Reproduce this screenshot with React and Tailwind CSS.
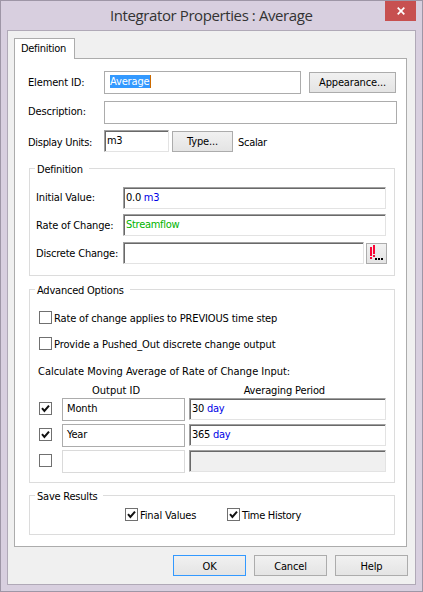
import React from "react";
import clsx from "clsx";

const outputs = [
  { id: "Month", value: "30", unit: "day", checked: true },
  { id: "Year", value: "365", unit: "day", checked: true },
  { id: "", value: "", unit: "", checked: false },
];

const Button = ({ children, className, primary }) => (
  <button
    className={clsx(
      "flex h-[21px] shrink-0 items-center justify-center border bg-linear-to-b from-[#f1f1f1] to-[#e4e4e4]",
      primary ? "border-[#3399ff]" : "border-[#acacac]",
      className
    )}
  >
    {children}
  </button>
);

const Checkbox = ({ checked }) => (
  <span className="flex size-[13px] shrink-0 items-center justify-center border border-[#707070] bg-white">
    {checked && (
      <svg width="11" height="11" viewBox="0 0 11 11" fill="none">
        <path d="M2 5.2 L4.4 7.9 L9 2.6" stroke="#111" strokeWidth="2" />
      </svg>
    )}
  </span>
);

/* flat single-line field */
const Field = ({ children, className }) => (
  <div className={clsx("flex shrink-0 items-center border bg-white", className)}>{children}</div>
);

/* sunken field for values and units */
const Sunken = ({ children, className }) => (
  <div
    className={clsx(
      "h-[22px] shrink-0 border border-t-[#a0a0a0] border-r-[#e3e3e3] border-b-[#e3e3e3] border-l-[#a0a0a0] shadow-[inset_1px_1px_0_#696969] pl-[2px] pt-[2px] leading-[15px] tracking-[-0.28px]",
      className
    )}
  >
    {children}
  </div>
);

const Group = ({ title, className, children }) => (
  <section className={clsx("ml-[14px] w-[366px] border border-[#dcdcdc]", className)}>
    <h2 className="-mt-[8px] ml-[5px] flex h-[15px] w-fit items-center bg-white pt-[2px] pr-[6px] pl-[2px] tracking-[-0.22px]">
      {title}
    </h2>
    {children}
  </section>
);

export default function App() {
  return (
    <div className="flex h-[592px] w-[423px] flex-col border border-[#9e96a6] bg-[#d8cfdf] font-['DejaVu_Sans_Condensed','DejaVu_Sans',sans-serif] text-[11px] leading-[15px] tracking-[-0.15px] whitespace-nowrap text-black">
      <header className="flex h-[29px] shrink-0">
        <h1 className="w-[384px] pl-[109px] font-['Open_Sans',sans-serif] text-[15px] leading-[29px] tracking-[-0.4px] text-[#333]">
          Integrator Properties : Average
        </h1>
        <button className="flex h-[20px] w-[31px] items-center justify-center bg-[#c75050]">
          <svg width="8" height="8" viewBox="0 0 8 8">
            <path d="M0.7 0.7 L7.3 7.3 M7.3 0.7 L0.7 7.3" stroke="#fff" strokeWidth="1.7" />
          </svg>
        </button>
      </header>

      <main className="ml-[6px] h-[555px] w-[409px] border border-[#b0a9b7] bg-[#f0f0f0] pt-[7px] pl-[6px]">
        <div className="relative z-10 -mb-px flex h-[21px] w-[61px] items-center border border-b-0 border-[#acacac] bg-white pb-[2px] pl-[6px] tracking-[-0.3px]">
          Definition
        </div>

        <div className="h-[489px] w-[393px] border border-[#acacac] bg-white pt-[12px]">
          <div className="flex h-[23px] items-center pl-[13px]">
            <span className="w-[76px]">Element ID:</span>
            <Field className="h-[23px] w-[197px] border-[#acacac] pl-[5px]">
              <span className="-mt-[2px] h-[13px] border-r border-[#cc6a00] bg-[#3399ff] leading-[13px] text-white">
                Average
              </span>
            </Field>
            <Button className="ml-[8px] w-[87px]">Appearance...</Button>
          </div>
          <div className="mt-[7px] flex h-[23px] items-center pl-[13px]">
            <span className="w-[76px] pb-[2px]">Description:</span>
            <Field className="h-[23px] w-[293px] border-[#acacac]" />
          </div>
          <div className="mt-[6px] flex h-[22px] items-center pl-[13px]">
            <span className="w-[76px] pt-[2px] tracking-[-0.3px]">Display Units:</span>
            <Sunken className="w-[65px]">m3</Sunken>
            <Button className="mt-px ml-[3px] w-[61px]">Type...</Button>
            <span className="ml-[5px] pt-[2px] tracking-[-0.3px]">Scalar</span>
          </div>

          <Group title="Definition" className="mt-[16px] h-[108px]">
            <div className="mt-[11px] flex items-center pl-[6px]">
              <span className="w-[87px] pb-[2px]">Initial Value:</span>
              <Sunken className="w-[263px]">
                0.0 <span className="text-[#0000e6]">m3</span>
              </Sunken>
            </div>
            <div className="mt-[5px] flex items-center pl-[6px]">
              <span className="w-[87px]">Rate of Change:</span>
              <Sunken className="w-[263px] text-[#00b300]">Streamflow</Sunken>
            </div>
            <div className="mt-[6px] flex items-center pl-[6px]">
              <span className="w-[87px] pt-px tracking-[-0.2px]">Discrete Change:</span>
              <Sunken className="w-[241px]" />
              <Button className="mt-px ml-[2px] w-[21px]">
                <svg width="19" height="19" viewBox="0 0 19 19" shapeRendering="crispEdges">
                  <path d="M3 3h2v9h-2z M3 13h2v2h-2z M6 1h2v9h-2z M6 11h2v2h-2z" fill="#fa0535" />
                  <path d="M8 14h2v2h-2z M11 14h2v2h-2z M14 14h2v2h-2z" fill="#000" />
                </svg>
              </Button>
            </div>
          </Group>

          <Group title="Advanced Options" className="mt-[13px] h-[194px]">
            <label className="mt-[14px] flex h-[13px] items-center gap-[2px] pl-[9px]">
              <Checkbox />
              <span className="pt-[2px]">Rate of change applies to PREVIOUS time step</span>
            </label>
            <label className="mt-[13px] flex h-[13px] items-center gap-[2px] pl-[9px]">
              <Checkbox />
              <span className="pt-[2px] tracking-[-0.1px]">Provide a Pushed_Out discrete change output</span>
            </label>
            <p className="mt-[14px] pl-[8px] tracking-[-0.02px]">Calculate Moving Average of Rate of Change Input:</p>
            <div className="mt-[4px] flex h-[15px]">
              <span className="pl-[62px] tracking-normal">Output ID</span>
              <span className="ml-auto pr-[69px]">Averaging Period</span>
            </div>
            <div className="flex flex-col gap-[3px]">
              {outputs.map((row, i) => (
                <div key={i} className="flex h-[23px] pl-[9px]">
                  <div className="mt-[4px]">
                    <Checkbox checked={row.checked} />
                  </div>
                  <Field
                    className={clsx(
                      "ml-[10px] h-[23px] w-[123px] pb-[3px] pl-[4px]",
                      row.checked ? "border-[#acacac]" : "border-[#dadada]"
                    )}
                  >
                    {row.id}
                  </Field>
                  <Sunken className={clsx("ml-[4px] w-[197px]", !row.checked && "bg-[#f0f0f0]")}>
                    {row.value} <span className="text-[#0000e6]">{row.unit}</span>
                  </Sunken>
                </div>
              ))}
            </div>
          </Group>

          <Group title="Save Results" className="mt-[12px] h-[40px]">
            <div className="mt-[5px] flex">
              <label className="flex h-[13px] w-[197px] items-center gap-[2px] pl-[95px]">
                <Checkbox checked />
                <span className="pt-[2px]">Final Values</span>
              </label>
              <label className="flex h-[13px] items-center gap-[2px]">
                <Checkbox checked />
                <span className="pt-[2px] tracking-[-0.3px]">Time History</span>
              </label>
            </div>
          </Group>
        </div>

        <footer className="mt-[8px] flex gap-[8px] pl-[159px]">
          <Button primary className="w-[73px] pt-px">OK</Button>
          <Button className="w-[73px] pt-px">Cancel</Button>
          <Button className="w-[73px] pt-px">Help</Button>
        </footer>
      </main>
    </div>
  );
}
